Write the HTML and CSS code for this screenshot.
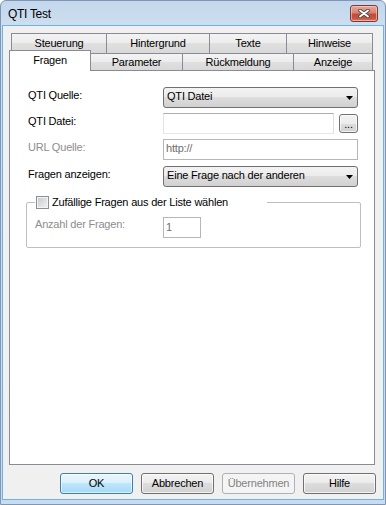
FILE: index.html
```html
<!DOCTYPE html>
<html lang="de">
<head>
<meta charset="utf-8">
<title>QTI Test</title>
<link rel="stylesheet" href="styles.css">
</head>
<body>
<div class="window">
  <div class="titlebar">
    <span class="title">QTI Test</span>
    <div class="close">
      <svg width="12" height="9" viewBox="0 0 12 9">
        <path d="M2 1.5 L10 7.5 M10 1.5 L2 7.5" stroke="#4a4a4a" stroke-width="3.6" stroke-linecap="round" fill="none"/>
        <path d="M2 1.5 L10 7.5 M10 1.5 L2 7.5" stroke="#ffffff" stroke-width="1.8" stroke-linecap="round" fill="none"/>
      </svg>
    </div>
  </div>
  <div class="client">
    <div class="tabstrip">
      <div class="tabrow back">
        <div class="tab t-steuerung">Steuerung</div>
        <div class="tab t-hintergrund">Hintergrund</div>
        <div class="tab t-texte">Texte</div>
        <div class="tab t-hinweise">Hinweise</div>
      </div>
      <div class="tabrow front">
        <div class="tab selected t-fragen">Fragen</div>
        <div class="tab t-parameter">Parameter</div>
        <div class="tab t-rueck">Rückmeldung</div>
        <div class="tab t-anzeige">Anzeige</div>
      </div>
    </div>
    <div class="panel">
      <div class="form">
        <div class="label">QTI Quelle:</div>
        <div class="combo"><span class="combo-text">QTI Datei</span><svg class="arrow" width="7" height="4" viewBox="0 0 7 4"><path d="M0 0 H7 L3.5 4 Z" fill="#000"/></svg></div>
        <div class="label">QTI Datei:</div>
        <div class="filerow"><div class="textbox file"></div><div class="btn browse">...</div></div>
        <div class="label disabled">URL Quelle:</div>
        <div class="textbox disabled-box wide">http://</div>
        <div class="label">Fragen anzeigen:</div>
        <div class="combo"><span class="combo-text">Eine Frage nach der anderen</span><svg class="arrow" width="7" height="4" viewBox="0 0 7 4"><path d="M0 0 H7 L3.5 4 Z" fill="#000"/></svg></div>
      </div>
      <fieldset class="group">
        <legend class="group-legend"><span class="check"></span><span>Zufällige Fragen aus der Liste wählen</span></legend>
        <div class="group-row">
          <div class="label-sm disabled">Anzahl der Fragen:</div>
          <div class="textbox disabled-box num">1</div>
        </div>
      </fieldset>
    </div>
    <div class="buttons">
      <div class="btn dlg default">OK</div>
      <div class="btn dlg">Abbrechen</div>
      <div class="btn dlg off">Übernehmen</div>
      <div class="btn dlg">Hilfe</div>
    </div>
  </div>
</div>
</body>
</html>
```
FILE: styles.css
```css
html, body {
  margin: 0;
  padding: 0;
  background: #ffffff;
}
body {
  font-family: "Liberation Sans", Arial, sans-serif;
  font-size: 11px;
  letter-spacing: -0.2px;
  color: #000;
}
.window {
  width: 386px;
  height: 505px;
  box-sizing: border-box;
  border: 1px solid #7f97b4;
  border-radius: 6px 6px 0 0;
  background: linear-gradient(#c3d6ec, #cddeef 24px, #c9dbee);
  padding: 0 1px 4px 1px;
  display: flex;
  flex-direction: column;
}
.titlebar {
  height: 24px;
  display: flex;
  justify-content: space-between;
  align-items: flex-start;
  padding: 0 6px 0 6px;
}
.title {
  margin-top: 6px;
  font-size: 12px;
  line-height: 14px;
  letter-spacing: -0.3px;
  color: #000;
}
.close {
  margin-top: 4px;
  width: 28px;
  height: 17px;
  box-sizing: border-box;
  border: 1px solid #7a3b36;
  border-radius: 3px;
  background: linear-gradient(#e6a898 0%, #d98472 45%, #c54b3a 55%, #c8513e 80%, #d97a5e 100%);
  box-shadow: inset 0 0 0 1px rgba(255, 220, 210, 0.55);
  display: flex;
  align-items: center;
  justify-content: center;
}
.client {
  flex: 1;
  border: 1px solid #6ab4e6;
  background: #f0f0f0;
  padding: 7px 8px 5px 6px;
  display: flex;
  flex-direction: column;
}
.tabstrip {
  height: 37px;
}
.tabrow {
  display: flex;
  align-items: flex-start;
}
.tabrow.back {
  height: 20px;
  padding-left: 2px;
}
.tabrow.front {
  height: 17px;
}
.tab {
  box-sizing: border-box;
  border: 1px solid #898c95;
  border-bottom: none;
  background: linear-gradient(#f3f3f3 0%, #ececec 50%, #e0e0e0 50%, #d8d8d8 100%);
  text-align: center;
  white-space: nowrap;
  margin-left: -1px;
}
.tab:first-child {
  margin-left: 0;
}
.back .tab {
  height: 20px;
  line-height: 19px;
}
.front .tab {
  height: 17px;
  line-height: 16px;
}
.front .tab.selected {
  position: relative;
  z-index: 2;
  height: 21px;
  margin-top: -3px;
  line-height: 19px;
  background: #ffffff;
}
.t-steuerung { width: 96px; }
.t-hintergrund { width: 104px; }
.t-texte { width: 78px; }
.t-hinweise { width: 87px; }
.t-fragen { width: 82px; }
.t-parameter { width: 93px; }
.t-rueck { width: 112px; }
.t-anzeige { width: 80px; }

.panel {
  flex: 1;
  border: 1px solid #898c95;
  background: #ffffff;
  padding: 16px 0 0 16px;
}
.form {
  margin-left: 2px;
  display: grid;
  grid-template-columns: 135px 195px;
  grid-template-rows: 26px 26px 27px 21px;
  align-items: start;
}
.label {
  line-height: 17px;
  white-space: nowrap;
}
.disabled {
  color: #8d8d8d;
}
.combo {
  height: 21px;
  box-sizing: border-box;
  border: 1px solid #707070;
  border-radius: 3px;
  background: linear-gradient(#f3f3f3 0%, #ebebeb 50%, #dddddd 50%, #d1d1d1 100%);
  display: flex;
  justify-content: space-between;
  padding: 0 4px 0 3px;
}
.combo-text {
  line-height: 16px;
  white-space: nowrap;
}
.arrow {
  align-self: center;
}
.filerow {
  display: flex;
  align-items: center;
  gap: 5px;
  height: 21px;
}
.textbox {
  height: 21px;
  box-sizing: border-box;
  border: 1px solid;
  border-color: #abadb3 #dbdfe6 #e3e9ef #e2e3ea;
  background: #ffffff;
  padding: 0 2px;
  line-height: 17px;
  white-space: nowrap;
}
.textbox.file {
  width: 171px;
}
.textbox.wide {
  width: 195px;
}
.disabled-box {
  border-color: #b4b8bc;
  color: #6d6d6d;
}
.btn {
  box-sizing: border-box;
  border: 1px solid #707070;
  border-radius: 3px;
  background: linear-gradient(#f3f3f3 0%, #ebebeb 50%, #dddddd 50%, #d1d1d1 100%);
  box-shadow: inset 0 0 0 1px rgba(255, 255, 255, 0.7);
  text-align: center;
  white-space: nowrap;
}
.browse {
  width: 19px;
  height: 19px;
  line-height: 19px;
}
.group {
  margin: 9px 0 0 0;
  width: 335px;
  height: 52px;
  box-sizing: border-box;
  border: 1px solid #bcc0c4;
  border-radius: 2px;
  padding: 0 8px;
}
.group-legend {
  width: 232px;
  height: 13px;
  box-sizing: border-box;
  padding: 0 0 0 1px;
  display: flex;
  align-items: center;
  gap: 3px;
  line-height: 13px;
  white-space: nowrap;
}
.check {
  width: 13px;
  height: 13px;
  box-sizing: border-box;
  border: 1px solid #8e8f8f;
  background: linear-gradient(135deg, #c4c7cc 0%, #e2e3e6 60%, #f2f2f2 100%);
  box-shadow: inset 0 0 0 1px #f4f4f4;
  flex: none;
}
.group-row {
  display: flex;
  margin-top: 8px;
}
.label-sm {
  width: 128px;
  line-height: 15px;
  white-space: nowrap;
}
.textbox.num {
  width: 38px;
  line-height: 19px;
}
.buttons {
  margin-top: 8px;
  margin-right: -1px;
  display: flex;
  justify-content: flex-end;
  gap: 8px;
}
.btn.dlg {
  width: 73px;
  height: 21px;
  line-height: 19px;
}
.btn.default {
  border-color: #3c7fb1;
  background: linear-gradient(#eaf6fd 0%, #d9f0fc 50%, #bee6fd 50%, #a7d9f5 100%);
  box-shadow: inset 0 0 0 1px rgba(255, 255, 255, 0.6);
}
.btn.off {
  border-color: #adb2b5;
  background: #f4f4f4;
  box-shadow: none;
  color: #838383;
}
```
